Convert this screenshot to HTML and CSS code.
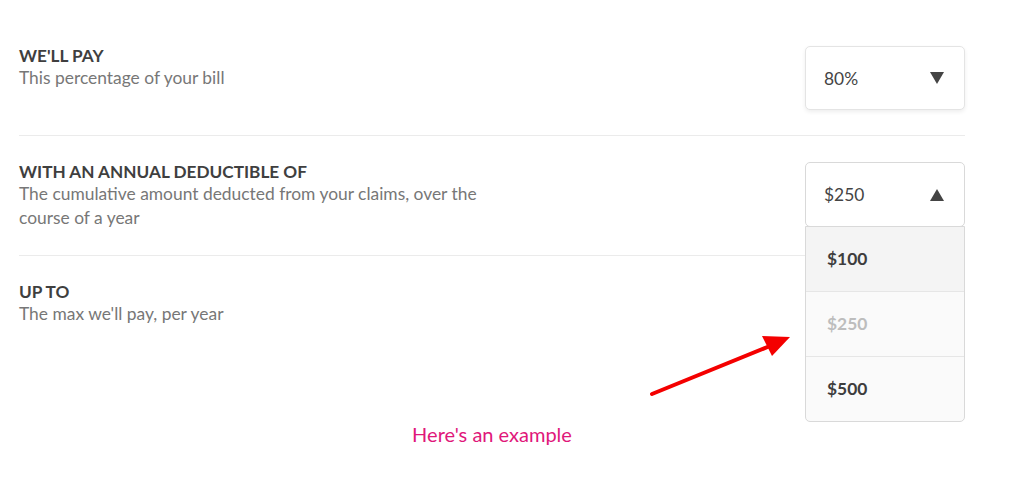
FILE: index.html
```html
<html lang="en">
<head>
    <meta charset="UTF-8">
    <title>Coverage</title>
    <link rel="stylesheet" href="styles.css">
</head>
<body>
<div id="app">
    <div class="row">
        <div class="label">
            <h3 class="title">WE'LL PAY</h3>
            <p class="hint">This percentage of your bill</p>
        </div>
        <div class="select">
            <div class="select-head">
                <span>80%</span>
                <span class="caret down"></span>
            </div>
        </div>
    </div>

    <div class="row">
        <div class="label">
            <h3 class="title">WITH AN ANNUAL DEDUCTIBLE OF</h3>
            <p class="hint">The cumulative amount deducted from your claims, over the course of a year</p>
        </div>
        <div class="select open">
            <div class="select-head">
                <span>$250</span>
                <span class="caret up"></span>
            </div>
            <ul class="options">
                <li class="option hover">$100</li>
                <li class="option selected">$250</li>
                <li class="option">$500</li>
            </ul>
        </div>
    </div>

    <div class="row last">
        <div class="label">
            <h3 class="title">UP TO</h3>
            <p class="hint">The max we'll pay, per year</p>
        </div>
    </div>

    <p class="example">Here's an example</p>

    <!-- annotation arrow -->
    <svg class="pointer" width="160" height="80" viewBox="0 0 160 80">
        <line x1="12" y1="69" x2="130" y2="21" stroke="#f40000" stroke-width="4" stroke-linecap="round"/>
        <polygon points="150,12 122,11 132,31" fill="#f40000"/>
    </svg>
</div>
</body>
</html>
```

FILE: styles.css
```css
body {
    margin: 0;
    padding: 0;
    font-family: Lato, "Open Sans", sans-serif;
    background: #fff;
}

#app {
    position: relative;
    width: 946px;
    padding: 21px 19px;
}

.row {
    display: flex;
    justify-content: space-between;
    align-items: flex-start;
    padding: 25px 0;
    border-bottom: 1px solid #ebebeb;
}

.row + .row {
    padding-top: 26px;
}

.row.last {
    border-bottom: none;
}

.label {
    width: 466px;
}

.title {
    margin: 0;
    font-size: 17.2px;
    font-weight: bold;
    line-height: 20px;
    color: #3f3f3f;
}

.hint {
    margin: 0;
    font-size: 17.4px;
    line-height: 24px;
    color: #777;
}

.select {
    position: relative;
    width: 158px;
    border: 1px solid #e4e4e4;
    border-radius: 5px;
    background: #fff;
    box-shadow: 0 2px 4px rgba(0, 0, 0, 0.07);
}

.select-head {
    display: flex;
    justify-content: space-between;
    align-items: center;
    height: 62px;
    padding: 0 20px 0 18px;
    font-size: 17.4px;
    color: #444;
}

.caret {
    width: 0;
    height: 0;
    border-left: 7px solid transparent;
    border-right: 7px solid transparent;
}

.caret.down {
    border-top: 12px solid #444;
}

.caret.up {
    border-bottom: 12px solid #444;
}

.select.open {
    border-color: #d9d9d9;
    box-shadow: none;
}

.select.open .select-head {
    height: 63px;
}

.options {
    position: absolute;
    left: -1px;
    top: 63px;
    width: 158px;
    margin: 0;
    padding: 0;
    list-style: none;
    border: 1px solid #d9d9d9;
    border-radius: 0 0 5px 5px;
    background: #fafafa;
}

.option {
    height: 64px;
    line-height: 64px;
    padding-left: 21px;
    font-size: 17.4px;
    font-weight: bold;
    color: #3d3d3d;
    border-bottom: 1px solid #e6e6e6;
}

.option:last-child {
    border-bottom: none;
}

.option.hover {
    background: #f4f4f4;
}

.option.selected {
    color: #bdbdbd;
}

.example {
    margin: 71px 0 0;
    text-align: center;
    font-size: 20px;
    line-height: 24px;
    color: #e0177a;
}

.pointer {
    position: absolute;
    left: 640px;
    top: 325px;
}
```
